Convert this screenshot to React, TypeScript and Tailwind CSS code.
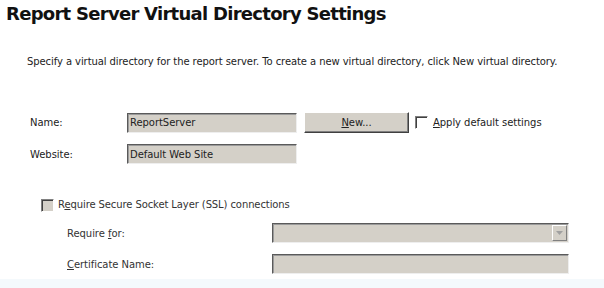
import React from "react";

const sunken =
  "h-[20px] bg-[#d4d0c8] border-t border-l border-t-[#5a5a5a] border-l-[#5a5a5a] border-b border-r border-b-[#eeeeee] border-r-[#eeeeee] shadow-[inset_1px_1px_0_#9a9a9a]";

function Checkbox({ disabled }: { disabled?: boolean }) {
  return (
    <span
      className={
        "inline-block w-[13px] h-[13px] border-t border-l border-t-[#808080] border-l-[#808080] border-b border-r border-b-[#ffffff] border-r-[#ffffff] shadow-[inset_1px_1px_0_#404040] " +
        (disabled ? "bg-[#d4d0c8]" : "bg-white")
      }
    />
  );
}

export default function App() {
  return (
    <div
      className="w-[604px] h-[288px] bg-white text-black overflow-hidden flex flex-col"
      style={{ fontFamily: '"DejaVu Sans", Verdana, sans-serif' }}
    >
      {/* Title */}
      <h1 className="pl-[6px] pt-[2px] text-[18px] font-bold leading-[24px] tracking-[-0.72px] text-[#111]">
        Report Server Virtual Directory Settings
      </h1>

      {/* Description */}
      <p className="pl-[27px] mt-[29px] text-[10px] leading-[14px] tracking-[-0.08px] text-[#222]">
        Specify a virtual directory for the report server. To create a new virtual directory, click New virtual directory.
      </p>

      {/* Name row */}
      <div className="flex items-center mt-[43px] h-[21px] text-[10px] tracking-[-0.05px] text-[#222]">
        <span className="pl-[30px] w-[127px]">Name:</span>
        <div className={sunken + " w-[170px] flex items-center pl-[2px]"}>ReportServer</div>
        <button className="ml-[7px] w-[105px] h-[21px] bg-[#d4d0c8] border-b border-r border-b-[#404040] border-r-[#404040] border-t border-l border-t-white border-l-white shadow-[inset_-1px_-1px_0_#808080] text-[10px]">
          <span className="underline">N</span>ew...
        </button>
        <span className="ml-[6px] flex items-center gap-[5px]">
          <Checkbox />
          <span>
            <span className="underline">A</span>pply default settings
          </span>
        </span>
      </div>

      {/* Website row */}
      <div className="flex items-center mt-[11px] h-[20px] text-[10px] tracking-[-0.05px] text-[#222]">
        <span className="pl-[30px] w-[127px]">Website:</span>
        <div className={sunken + " w-[170px] flex items-center pl-[2px]"}>Default Web Site</div>
      </div>

      {/* SSL */}
      <div className="flex items-center mt-[34px] h-[14px] pl-[41px] gap-[4px] text-[10px] leading-[14px] tracking-[-0.1px] text-[#333]">
        <Checkbox disabled />
        <span>
          R<span className="underline">e</span>quire Secure Socket Layer (SSL) connections
        </span>
      </div>

      <div className="flex items-center mt-[11px] h-[20px] text-[10px] tracking-[-0.05px] text-[#333]">
        <span className="pl-[67px] w-[272px]">
          Require <span className="underline">f</span>or:
        </span>
        <div className={sunken + " w-[297px] flex items-center justify-end pr-[1px]"}>
          <div className="w-[15px] h-[16px] bg-[#d4d0c8] border-t border-l border-t-white border-l-white border-b border-r border-b-[#808080] border-r-[#808080] flex items-center justify-center">
            <svg width="7" height="4" viewBox="0 0 7 4">
              <path d="M0 0h7L3.5 4z" fill="#a0a0a0" />
            </svg>
          </div>
        </div>
      </div>

      <div className="flex items-center mt-[11px] h-[20px] text-[10px] tracking-[-0.05px] text-[#333]">
        <span className="pl-[67px] w-[272px]">
          <span className="underline">C</span>ertificate Name:
        </span>
        <div className={sunken + " w-[297px]"} />
      </div>

      <div className="mt-auto h-[9px] bg-[#f4f9fc]" />
    </div>
  );
}
